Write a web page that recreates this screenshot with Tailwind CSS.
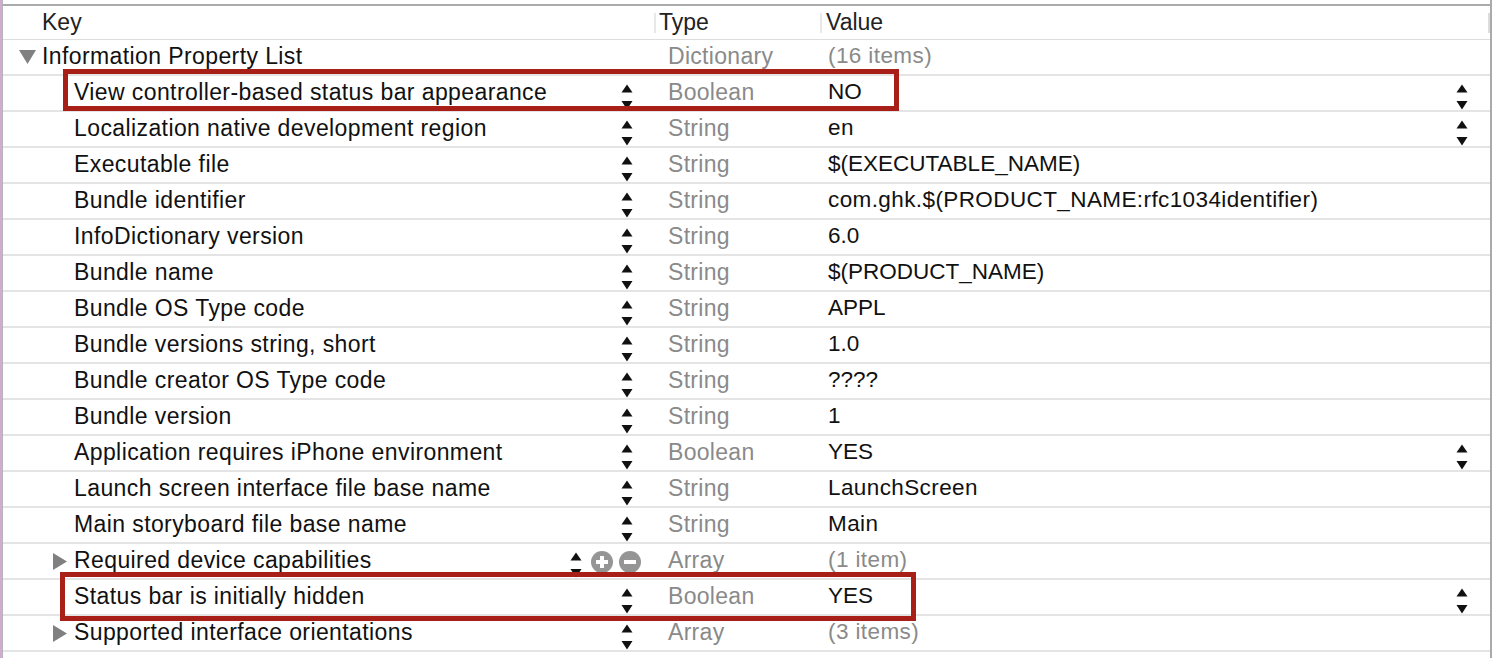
<!DOCTYPE html>
<html lang="en">
<head>
    <meta charset="UTF-8">
    <title>Info.plist</title>
    <script src="https://cdn.jsdelivr.net/npm/@tailwindcss/browser@4"></script>
</head>
<body class="bg-white overflow-hidden font-['Liberation_Sans',Arial,sans-serif]">
    <div class="w-[1492px] h-[658px] overflow-hidden border-l-2 border-l-[#d3aad2] border-r-2 border-r-[#aaaaaa]">
        <div class="relative h-full border-l border-l-[#b5b5b5] pt-1">
            <div class="h-9 border-t-2 border-t-[#ababab] border-b border-b-[#dddddd] flex text-[23px] text-[#222222] leading-[33px]">
                <div class="w-[651px] pl-[39px]">Key</div>
                <div class="w-[166px] pl-[3px] border-l-2 border-l-[#e8e8e8] h-5 mt-[7px] leading-[18px]">Type</div>
                <div class="pl-[4px] border-l-2 border-l-[#e8e8e8] h-5 mt-[7px] leading-[18px]">Value</div>
            </div>
            <div id="rows"></div>
            <div class="absolute right-0 top-[13px] w-[2px] h-[20px] bg-[#dcdcdc]"></div>
            <div class="absolute left-[60px] top-[69px] w-[836px] h-[42px] border-[5px] border-[#a81f17]"></div>
            <div class="absolute left-[57px] top-[572px] w-[856px] h-[49px] border-[5px] border-[#a81f17]"></div>
        </div>
    </div>

    <script>
        const upDown = '<svg width="12" height="26" viewBox="0 0 12 26" class="block"><path d="M6 0.5 L11.5 8.5 L0.5 8.5 Z M0.5 17 L11.5 17 L6 25.5 Z" fill="#111111"/></svg>';
        const rows = [
            ['View controller-based status bar appearance', 'Boolean', 'NO', 1],
            ['Localization native development region', 'String', 'en', 1],
            ['Executable file', 'String', '$(EXECUTABLE_NAME)', 0],
            ['Bundle identifier', 'String', 'com.ghk.$(PRODUCT_NAME:rfc1034identifier)', 0],
            ['InfoDictionary version', 'String', '6.0', 0],
            ['Bundle name', 'String', '$(PRODUCT_NAME)', 0],
            ['Bundle OS Type code', 'String', 'APPL', 0],
            ['Bundle versions string, short', 'String', '1.0', 0],
            ['Bundle creator OS Type code', 'String', '????', 0],
            ['Bundle version', 'String', '1', 0],
            ['Application requires iPhone environment', 'Boolean', 'YES', 1],
            ['Launch screen interface file base name', 'String', 'LaunchScreen', 0],
            ['Main storyboard file base name', 'String', 'Main', 0],
            ['Required device capabilities', 'Array', '(1 item)', 0, 'hover'],
            ['Status bar is initially hidden', 'Boolean', 'YES', 1],
            ['Supported interface orientations', 'Array', '(3 items)', 0, 'closed'],
        ];

        let html = `
            <div class="h-9 pb-[2px] flex items-center border-b-2 border-b-[#e4e4e4] relative">
                <svg width="17" height="14" viewBox="0 0 17 14" class="absolute left-[16px] top-[10px]"><path d="M0 0 L17 0 L8.5 14 Z" fill="#808080"/></svg>
                <div class="w-[665px] pl-[39px] text-[23px] tracking-[0.4px] text-[#111111]">Information Property List</div>
                <div class="w-[160px] text-[23px] tracking-[0.3px] text-[#8a8a8a]">Dictionary</div>
                <div class="text-[22.5px] tracking-[0.4px] text-[#8a8a8a]">(16 items)</div>
            </div>`;

        for (const [key, type, value, arrows, mode] of rows) {
            const muted = value.startsWith('(');
            const spacing = /[a-z]/.test(value) ? 'tracking-[0.4px]' : 'tracking-normal';
            html += `
            <div class="h-9 pb-[2px] flex items-center border-b-2 border-b-[#e4e4e4] relative">
                ${mode ? '<svg width="14" height="17" viewBox="0 0 14 17" class="absolute left-[50px] top-[9px]"><path d="M0 0 L14 8.5 L0 17 Z" fill="#808080"/></svg>' : ''}
                <div class="w-[665px] pl-[71px] text-[23px] tracking-[0.4px] text-[#111111] whitespace-nowrap">${key}</div>
                <div class="w-[160px] text-[23px] tracking-[0.3px] text-[#8a8a8a]">${type}</div>
                <div class="text-[22.5px] ${spacing} ${muted ? 'text-[#8a8a8a]' : 'text-[#111111]'} whitespace-nowrap">${value}</div>
                ${mode === 'hover' ? `
                <div class="absolute left-[567px] top-[8px]">${upDown}</div>
                <svg width="22" height="22" viewBox="0 0 22 22" class="absolute left-[588px] top-[7px]"><circle cx="11" cy="11" r="11" fill="#959595"/><path d="M11 5 V17 M5 11 H17" stroke="#ffffff" stroke-width="4"/></svg>
                <svg width="22" height="22" viewBox="0 0 22 22" class="absolute left-[616px] top-[7px]"><circle cx="11" cy="11" r="11" fill="#959595"/><path d="M5 11 H17" stroke="#ffffff" stroke-width="4"/></svg>
                ` : `<div class="absolute left-[618px] top-[8px]">${upDown}</div>`}
                ${arrows ? `<div class="absolute left-[1453px] top-[8px]">${upDown}</div>` : ''}
            </div>`;
        }
        document.getElementById('rows').innerHTML = html;
    </script>
</body>
</html>
